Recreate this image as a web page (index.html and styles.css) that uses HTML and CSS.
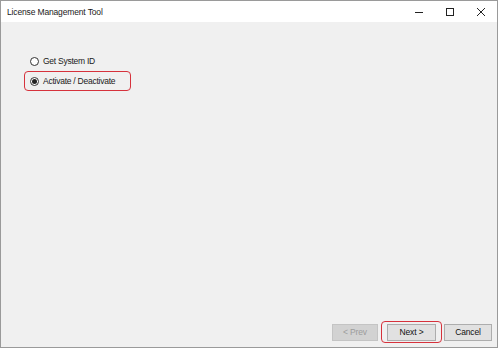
FILE: index.html
```html
<!DOCTYPE html>
<html>
<head>
<meta charset="utf-8">
<link rel="stylesheet" href="styles.css">
</head>
<body>
<div class="window">
  <div class="titlebar">
    <span class="title">License Management Tool</span>
    <div class="controls">
      <span class="ctl"><svg width="10" height="10" viewBox="0 0 10 10"><path d="M1 5.5H9" stroke="#222" stroke-width="1"/></svg></span>
      <span class="ctl"><svg width="10" height="10" viewBox="0 0 10 10"><rect x="1.5" y="1.5" width="7" height="7" fill="none" stroke="#222" stroke-width="1"/></svg></span>
      <span class="ctl"><svg width="10" height="10" viewBox="0 0 10 10"><path d="M1 1L9 9M9 1L1 9" stroke="#222" stroke-width="1"/></svg></span>
    </div>
  </div>
  <div class="content">
    <div class="options">
      <label class="option"><span class="radio"></span><span class="label">Get System ID</span></label>
      <label class="option highlight"><span class="radio checked"></span><span class="label">Activate / Deactivate</span></label>
    </div>
    <div class="footer">
      <span class="btn disabled">&lt; Prev</span>
      <span class="btn-wrap"><span class="btn">Next &gt;</span></span>
      <span class="btn cancel">Cancel</span>
    </div>
  </div>
</div>
</body>
</html>
```

FILE: styles.css
```css
html, body {
  margin: 0;
  padding: 0;
  background: #ffffff;
}
body {
  width: 500px;
  height: 349px;
  overflow: hidden;
  font-family: "Liberation Sans", Arial, sans-serif;
  color: #111;
}
.window {
  box-sizing: border-box;
  width: 498px;
  height: 348px;
  border: 1px solid #9a9a9a;
  display: flex;
  flex-direction: column;
  background: #f0f0f0;
}
.titlebar {
  height: 21px;
  background: #ffffff;
  display: flex;
  align-items: center;
  justify-content: space-between;
  flex-shrink: 0;
}
.title {
  font-size: 8.5px;
  padding-left: 6px;
  color: #1a1a1a;
  letter-spacing: -0.15px;
}
.controls {
  display: flex;
  height: 21px;
  align-items: center;
  padding-right: 1px;
}
.ctl {
  width: 31px;
  height: 21px;
  display: flex;
  align-items: center;
  justify-content: center;
}
.ctl svg { display: block; }
.content {
  flex: 1;
  display: flex;
  flex-direction: column;
  justify-content: space-between;
  padding: 29px 0 4px 23px;
}
.options {
  display: flex;
  flex-direction: column;
}
.option {
  box-sizing: border-box;
  width: 107px;
  height: 20px;
  border: 1.5px solid transparent;
  border-radius: 4px;
  display: flex;
  align-items: center;
  padding-left: 5px;
  font-size: 8.5px;
  letter-spacing: -0.25px;
  color: #1a1a1a;
}
.option.highlight {
  border-color: #d6323c;
}
.radio {
  box-sizing: border-box;
  width: 9px;
  height: 9px;
  border: 1px solid #333;
  border-radius: 50%;
  background: #fff;
  margin-right: 4px;
  display: flex;
  align-items: center;
  justify-content: center;
}
.radio.checked::after {
  content: "";
  width: 5px;
  height: 5px;
  border-radius: 50%;
  background: #222;
}
.footer {
  display: flex;
  justify-content: flex-end;
  align-items: center;
  height: 22px;
  padding-right: 5px;
}
.btn {
  box-sizing: border-box;
  height: 17px;
  width: 49px;
  background: #e1e1e1;
  border: 1px solid #adadad;
  display: flex;
  align-items: center;
  justify-content: center;
  font-size: 8.5px;
  letter-spacing: -0.15px;
  color: #111;
}
.btn.disabled {
  width: 46px;
  background: #d2d2d2;
  border-color: #c4c4c4;
  color: #9c9c9c;
  margin-right: 3px;
}
.btn.cancel {
  width: 48px;
  margin-left: 2px;
}
.btn-wrap {
  box-sizing: border-box;
  width: 61px;
  height: 22px;
  border: 1.5px solid #d6323c;
  border-radius: 4px;
  display: flex;
  align-items: center;
  justify-content: center;
}
```
